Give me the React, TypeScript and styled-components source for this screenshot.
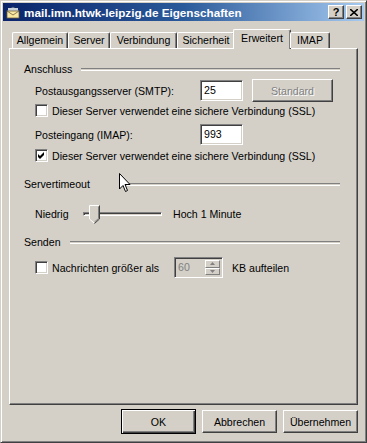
import { createGlobalStyle, styled } from "styled-components";

const FACE = "#d4d0c8";
const SHADOW = "#808080";
const DARK = "#404040";

const GlobalStyle = createGlobalStyle`
  html, body {
    margin: 0;
    padding: 0;
    background: ${FACE};
  }
  body {
    font-family: "Liberation Sans", Arial, sans-serif;
    font-size: 10.6px;
    color: #000;
  }
`;

const Window = styled.div`
  position: relative;
  width: 367px;
  height: 443px;
  box-sizing: border-box;
  background: ${FACE};
  border: 1px solid;
  border-color: ${FACE} ${DARK} ${DARK} ${FACE};
  box-shadow: inset 1px 1px #fff, inset -1px -1px ${SHADOW};
  padding: 2px;
  display: flex;
  flex-direction: column;
`;

const TitleBar = styled.div`
  height: 18px;
  display: flex;
  align-items: center;
  padding: 0 2px 0 2px;
  background: linear-gradient(90deg, #0a246a 0%, #2a5a9a 50%, #a6caf0 100%);
`;

const TitleText = styled.div`
  flex: 1;
  margin-left: 3px;
  color: #fff;
  font-weight: bold;
  font-size: 11.7px;
  font-family: "Liberation Sans", Arial, sans-serif;
  white-space: nowrap;
`;

const CaptionButton = styled.div<{ $gap?: number }>`
  width: 16px;
  height: 14px;
  box-sizing: border-box;
  margin-left: ${(p) => p.$gap ?? 0}px;
  background: ${FACE};
  border: 1px solid;
  border-color: #fff ${DARK} ${DARK} #fff;
  box-shadow: inset -1px -1px ${SHADOW};
  display: flex;
  align-items: center;
  justify-content: center;
  font-weight: bold;
  font-size: 11px;
  line-height: 1;
`;

const TabStrip = styled.div`
  display: flex;
  align-items: flex-end;
  height: 27px;
  margin: 0 6px;
  padding-left: 3px;
  position: relative;
  z-index: 1;
`;

const Tab = styled.div<{ $w: number; $active?: boolean }>`
  box-sizing: border-box;
  width: ${(p) => p.$w}px;
  height: ${(p) => (p.$active ? 20 : 16)}px;
  margin: ${(p) => (p.$active ? "0 -1px -1px -2px" : "0")};
  padding-top: ${(p) => (p.$active ? 2 : 1)}px;
  background: ${FACE};
  border-top: 1px solid #fff;
  border-left: 1px solid #fff;
  border-right: 1px solid ${DARK};
  box-shadow: inset -1px 0 ${SHADOW};
  border-radius: 2px 2px 0 0;
  text-align: center;
  white-space: nowrap;
`;

const Panel = styled.div`
  box-sizing: border-box;
  height: 357px;
  margin: 0 6px;
  border: 1px solid;
  border-color: #fff ${DARK} ${DARK} #fff;
  box-shadow: inset -1px -1px ${SHADOW};
  padding: 13px 17px 0 14px;
  display: flex;
  flex-direction: column;
`;

const GroupHeader = styled.div<{ $mt: number; $gap?: number }>`
  display: flex;
  align-items: center;
  height: 14px;
  margin-top: ${(p) => p.$mt}px;
  white-space: nowrap;
  &::after {
    content: "";
    flex: 1;
    margin-left: ${(p) => p.$gap ?? 9}px;
    height: 1px;
    border-top: 1px solid ${SHADOW};
    border-bottom: 1px solid #fff;
  }
`;

const Row = styled.div<{ $mt: number; $h: number }>`
  display: flex;
  align-items: center;
  height: ${(p) => p.$h}px;
  margin-top: ${(p) => p.$mt}px;
  padding-left: 11px;
  white-space: nowrap;
`;

const Label = styled.span<{ $w?: number; $ml?: number }>`
  width: ${(p) => (p.$w ? `${p.$w}px` : "auto")};
  margin-left: ${(p) => p.$ml ?? 0}px;
  flex-shrink: 0;
`;

const sunken = `
  box-sizing: border-box;
  border: 1px solid;
  border-color: ${SHADOW} #fff #fff ${SHADOW};
  box-shadow: inset 1px 1px ${DARK}, inset -1px -1px ${FACE};
`;

const TextBox = styled.div<{ $w: number }>`
  ${sunken}
  width: ${(p) => p.$w}px;
  height: 21px;
  background: #fff;
  padding: 2px 3px;
  line-height: 15px;
`;

const Button = styled.div<{ $w: number; $disabled?: boolean; $default?: boolean; $ml?: number }>`
  box-sizing: border-box;
  width: ${(p) => p.$w}px;
  height: ${(p) => (p.$default ? 25 : 23)}px;
  margin-left: ${(p) => p.$ml ?? 0}px;
  background: ${FACE};
  border: 1px solid;
  border-color: ${(p) =>
    p.$default ? "#000" : `#fff ${DARK} ${DARK} #fff`};
  box-shadow: ${(p) =>
    p.$default
      ? `inset 1px 1px #fff, inset -1px -1px ${DARK}, inset -2px -2px ${SHADOW}`
      : `inset -1px -1px ${SHADOW}`};
  display: flex;
  align-items: center;
  justify-content: center;
  color: ${(p) => (p.$disabled ? SHADOW : "#000")};
  text-shadow: ${(p) => (p.$disabled ? "1px 1px #fff" : "none")};
`;

const CheckBox = styled.div`
  ${sunken}
  width: 13px;
  height: 13px;
  background: #fff;
  margin-right: 4px;
  flex-shrink: 0;
  display: flex;
  align-items: center;
  justify-content: center;
`;

const SliderBox = styled.div`
  position: relative;
  width: 83px;
  height: 22px;
  margin-left: 12px;
  margin-right: 9px;
  display: flex;
  align-items: center;
`;

const Track = styled.div`
  ${sunken}
  width: 79px;
  height: 4px;
  margin-left: 2px;
`;

const Thumb = styled.svg`
  position: absolute;
  left: 8px;
  top: 2px;
`;

const SpinBox = styled.div`
  ${sunken}
  width: 49px;
  height: 21px;
  background: ${FACE};
  display: flex;
  color: ${SHADOW};
`;

const SpinValue = styled.div`
  flex: 1;
  padding: 2px 3px;
  line-height: 15px;
`;

const SpinButtons = styled.div`
  width: 15px;
  display: flex;
  flex-direction: column;
  padding: 2px 2px 2px 0;
`;

const SpinArrow = styled.div`
  flex: 1;
  background: ${FACE};
  border: 1px solid;
  border-color: #fff ${SHADOW} ${SHADOW} #fff;
  display: flex;
  align-items: center;
  justify-content: center;
`;

const ButtonRow = styled.div`
  display: flex;
  justify-content: flex-end;
  align-items: center;
  margin: 4px 6px 0 0;
`;

const Cursor = styled.svg`
  position: absolute;
  left: 118px;
  top: 172px;
`;

function TitleIcon() {
  return (
    <svg width="16" height="16" viewBox="0 0 16 16">
      <path d="M2 7 L8 3 L14 7 Z" fill="#b8c4d0" stroke="#506070" strokeWidth="0.8" />
      <rect x="3" y="4" width="10" height="3" fill="#c8d0d8" />
      <rect x="2" y="7" width="12" height="7" fill="#f8e8a0" stroke="#706040" strokeWidth="0.8" />
      <path d="M2 7 L8 11 L14 7" fill="none" stroke="#706040" strokeWidth="0.8" />
    </svg>
  );
}

function Check() {
  return (
    <svg width="7" height="7" viewBox="0 0 7 7">
      <path d="M0 2 L2 4 L6 0 L6 3 L2 7 L0 5 Z" fill="#000" />
    </svg>
  );
}

export default function App() {
  const tabs = [
    { t: "Allgemein", w: 56 },
    { t: "Server", w: 42 },
    { t: "Verbindung", w: 67 },
    { t: "Sicherheit", w: 58 },
    { t: "Erweitert", w: 58, active: true },
    { t: "IMAP", w: 40 },
  ];
  return (
    <>
      <GlobalStyle />
      <Window>
        <TitleBar>
          <TitleIcon />
          <TitleText>mail.imn.htwk-leipzig.de Eigenschaften</TitleText>
          <CaptionButton>?</CaptionButton>
          <CaptionButton $gap={2}>
            <svg width="8" height="7" viewBox="0 0 8 7">
              <path d="M0 0 L8 7 M8 0 L0 7" stroke="#000" strokeWidth="1.6" />
            </svg>
          </CaptionButton>
        </TitleBar>
        <TabStrip>
          {tabs.map((tab) => (
            <Tab key={tab.t} $w={tab.w} $active={tab.active}>
              {tab.t}
            </Tab>
          ))}
        </TabStrip>
        <Panel>
          <GroupHeader $mt={0}>Anschluss</GroupHeader>
          <Row $mt={4} $h={21}>
            <Label $w={165}>Postausgangsserver (SMTP):</Label>
            <TextBox $w={43}>25</TextBox>
            <Button $w={81} $ml={9} $disabled>
              Standard
            </Button>
          </Row>
          <Row $mt={3} $h={13}>
            <CheckBox />
            <Label>Dieser Server verwendet eine sichere Verbindung (SSL)</Label>
          </Row>
          <Row $mt={7} $h={21}>
            <Label $w={165}>Posteingang (IMAP):</Label>
            <TextBox $w={43}>993</TextBox>
          </Row>
          <Row $mt={4} $h={13}>
            <CheckBox>
              <Check />
            </CheckBox>
            <Label>Dieser Server verwendet eine sichere Verbindung (SSL)</Label>
          </Row>
          <GroupHeader $mt={15} $gap={37}>
            Servertimeout
          </GroupHeader>
          <Row $mt={11} $h={24}>
            <Label $w={34}>Niedrig</Label>
            <SliderBox>
              <Track />
              <Thumb width="11" height="19" viewBox="0 0 11 19">
                <path d="M0.5 0.5 H10.5 V14 L5.5 18.5 L0.5 14 Z" fill={FACE} />
                <path d="M0.5 14 V0.5 H10" fill="none" stroke="#fff" />
                <path d="M10.5 0.5 V14 L5.5 18.5" fill="none" stroke={DARK} />
                <path d="M9.5 1.5 V13.5 L5.5 17" fill="none" stroke={SHADOW} />
                <path d="M0.5 14 L5 18" fill="none" stroke="#fff" />
              </Thumb>
            </SliderBox>
            <Label>Hoch 1 Minute</Label>
          </Row>
          <GroupHeader $mt={9}>Senden</GroupHeader>
          <Row $mt={8} $h={21}>
            <CheckBox />
            <Label $w={122}>Nachrichten größer als</Label>
            <SpinBox>
              <SpinValue>60</SpinValue>
              <SpinButtons>
                <SpinArrow>
                  <svg width="5" height="3" viewBox="0 0 5 3">
                    <path d="M0 3 L2.5 0 L5 3 Z" fill={SHADOW} />
                  </svg>
                </SpinArrow>
                <SpinArrow>
                  <svg width="5" height="3" viewBox="0 0 5 3">
                    <path d="M0 0 L2.5 3 L5 0 Z" fill={SHADOW} />
                  </svg>
                </SpinArrow>
              </SpinButtons>
            </SpinBox>
            <Label $ml={9}>KB aufteilen</Label>
          </Row>
        </Panel>
        <ButtonRow>
          <Button $w={75} $default>
            OK
          </Button>
          <Button $w={75} $ml={6}>
            Abbrechen
          </Button>
          <Button $w={75} $ml={6}>
            Übernehmen
          </Button>
        </ButtonRow>
        <Cursor width="12" height="20" viewBox="0 0 12 20">
          <path
            d="M0.5 0.5 L0.5 16 L4 12.5 L6.5 18.5 L8.5 17.5 L6 11.5 L11 11.5 Z"
            fill="#fff"
            stroke="#000"
            strokeWidth="1"
          />
        </Cursor>
      </Window>
    </>
  );
}
